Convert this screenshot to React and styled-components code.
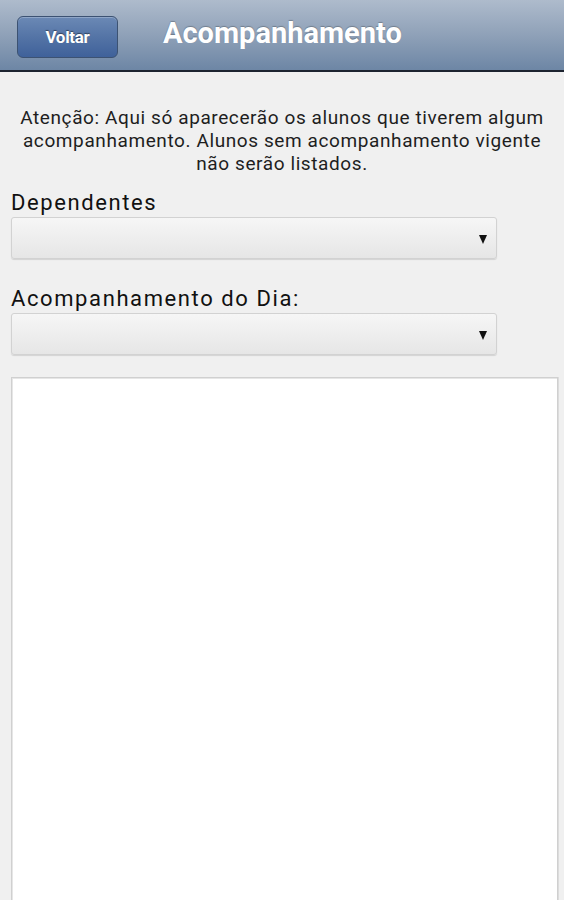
import React from "react";
import styled, { createGlobalStyle } from "styled-components";

const Global = createGlobalStyle`
  html, body { margin: 0; padding: 0; background: #f0f0f0; }
  body { font-family: Roboto, "Noto Sans", sans-serif; }
`;

const Page = styled.div`
  width: 564px;
  height: 900px;
  overflow: hidden;
  background: #f0f0f0;
  display: flex;
  flex-direction: column;
`;

const Header = styled.header`
  height: 70px;
  flex: none;
  display: flex;
  align-items: center;
  padding-left: 17px;
  gap: 45px;
  background: linear-gradient(to bottom, #aebbcc 0%, #8fa1b8 50%, #6d86a5 100%);
  border-bottom: 2px solid #1d2430;
  box-sizing: content-box;
`;

const BackButton = styled.button`
  width: 101px;
  height: 42px;
  margin-top: 4px;
  border: 1.5px solid #3c5272;
  border-radius: 6px;
  background: linear-gradient(to bottom, #6b89b5 0%, #5474a6 50%, #3f619a 100%);
  color: #fff;
  font-family: Roboto, sans-serif;
  font-weight: 700;
  font-size: 17px;
  letter-spacing: -0.3px;
  text-shadow: 0 -1px 1px rgba(0, 0, 0, 0.45);
  box-shadow: inset 0 1px 0 rgba(255, 255, 255, 0.25);
  padding: 0;
`;

const Title = styled.h1`
  margin: 0;
  margin-top: -4px;
  color: #fff;
  font-size: 29px;
  font-weight: 700;
  text-shadow: 0 -1px 1px rgba(0, 0, 0, 0.25);
`;

const Content = styled.main`
  flex: 1;
  display: flex;
  flex-direction: column;
  padding: 34px 6px 0 11px;
`;

const Notice = styled.p`
  margin: 0 0 0 -5px;
  text-align: center;
  font-size: 19px;
  letter-spacing: 0.6px;
  line-height: 23px;
  color: #1e1e1e;
`;

const Label = styled.label`
  display: block;
  font-size: 22px;
  letter-spacing: 1.6px;
  line-height: 26px;
  color: #111;
  margin-top: ${(p) => p.$top}px;
`;

const Select = styled.div`
  width: 486px;
  height: 42px;
  box-sizing: border-box;
  margin-top: 1px;
  border: 1px solid #d2d2d2;
  border-radius: 3px;
  background: linear-gradient(to bottom, #f6f6f6 0%, #e6e6e6 100%);
  box-shadow: 0 1px 1px rgba(0, 0, 0, 0.12);
  display: flex;
  align-items: center;
  justify-content: flex-end;
  padding-right: 9px;
`;

const Arrow = styled.span`
  width: 0;
  height: 0;
  border-left: 4.5px solid transparent;
  border-right: 4.5px solid transparent;
  border-top: 9px solid #111;
  margin-top: 2px;
`;

const TextBox = styled.div`
  margin-top: 22px;
  flex: 1;
  background: #fff;
  border: 1px solid #d0d0d0;
  border-bottom: none;
  box-shadow: inset 1px 1px 0 #e6e6e6, 1px 0 0 #dcdcdc;
`;

export default function App() {
  return (
    <>
      <Global />
      <Page>
        <Header>
          <BackButton>Voltar</BackButton>
          <Title>Acompanhamento</Title>
        </Header>
        <Content>
          <Notice>
            Atenção: Aqui só aparecerão os alunos que tiverem algum
            acompanhamento. Alunos sem acompanhamento vigente não serão listados.
          </Notice>
          <Label $top={15}>Dependentes</Label>
          <Select>
            <Arrow />
          </Select>
          <Label $top={27}>Acompanhamento do Dia:</Label>
          <Select>
            <Arrow />
          </Select>
          <TextBox />
        </Content>
      </Page>
    </>
  );
}
